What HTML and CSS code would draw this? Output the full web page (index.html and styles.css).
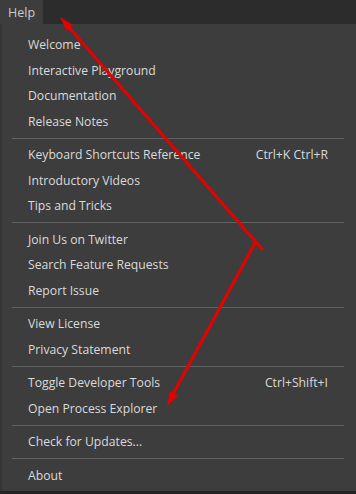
FILE: index.html
```html
<!DOCTYPE html>
<html lang="en">
<head>
<meta charset="UTF-8" />
<meta name="viewport" content="width=device-width, initial-scale=1.0" />
<title>Help menu</title>
<link rel="stylesheet" href="styles.css">
</head>
<body>
  <div class="menubar">
    <div class="menubar-item active">Help</div>
  </div>
  <ul class="menu">
    <li class="item"><span>Welcome</span></li>
    <li class="item"><span>Interactive Playground</span></li>
    <li class="item"><span>Documentation</span></li>
    <li class="item"><span>Release Notes</span></li>
    <li class="separator"></li>
    <li class="item"><span>Keyboard Shortcuts Reference</span><span class="keys">Ctrl+K Ctrl+R</span></li>
    <li class="item"><span>Introductory Videos</span></li>
    <li class="item"><span>Tips and Tricks</span></li>
    <li class="separator"></li>
    <li class="item"><span>Join Us on Twitter</span></li>
    <li class="item"><span>Search Feature Requests</span></li>
    <li class="item"><span>Report Issue</span></li>
    <li class="separator"></li>
    <li class="item"><span>View License</span></li>
    <li class="item"><span>Privacy Statement</span></li>
    <li class="separator"></li>
    <li class="item"><span>Toggle Developer Tools</span><span class="keys">Ctrl+Shift+I</span></li>
    <li class="item"><span>Open Process Explorer</span></li>
    <li class="separator"></li>
    <li class="item"><span>Check for Updates...</span></li>
    <li class="separator"></li>
    <li class="item"><span>About</span></li>
  </ul>

  <!-- red annotation drawn over the menu -->
  <svg class="annotation" width="356" height="494" viewBox="0 0 356 494">
    <g stroke="#e60000" stroke-width="3" stroke-linecap="round" fill="none">
      <line x1="66" y1="24" x2="262" y2="249" />
      <line x1="255" y1="243" x2="172" y2="396" />
    </g>
    <g fill="#e60000">
      <polygon points="60,17 73,25 66.5,31" />
      <polygon points="167,406 178,395.5 170,391.5" />
    </g>
  </svg>
</body>
</html>
```

FILE: styles.css
```css
body{margin:0;background:#232323;font-family:"Open Sans","Noto Sans",sans-serif;font-size:12.2px;color:#dadada;width:356px;height:494px;overflow:hidden;position:relative;}
.menubar{display:flex;height:24px;background:#2c2c2c;}
.menubar-item{display:flex;align-items:center;padding:0 8px;font-size:12.5px;color:#cccccc;}
.menubar-item.active{background:#3d3d3d;width:27px;}
.menu{list-style:none;margin:0;padding:8px 0 3px;background:#3d3d3d;border-left:2px solid #353535;}
.item{display:flex;align-items:center;justify-content:space-between;height:25.5px;padding:0 28px 0 26px;}
.keys{color:#dadada;}
.separator{margin:3.5px 12px 3.5px 10px;border-top:1px solid #606060;}
.annotation{position:absolute;left:0;top:0;pointer-events:none;}
```
